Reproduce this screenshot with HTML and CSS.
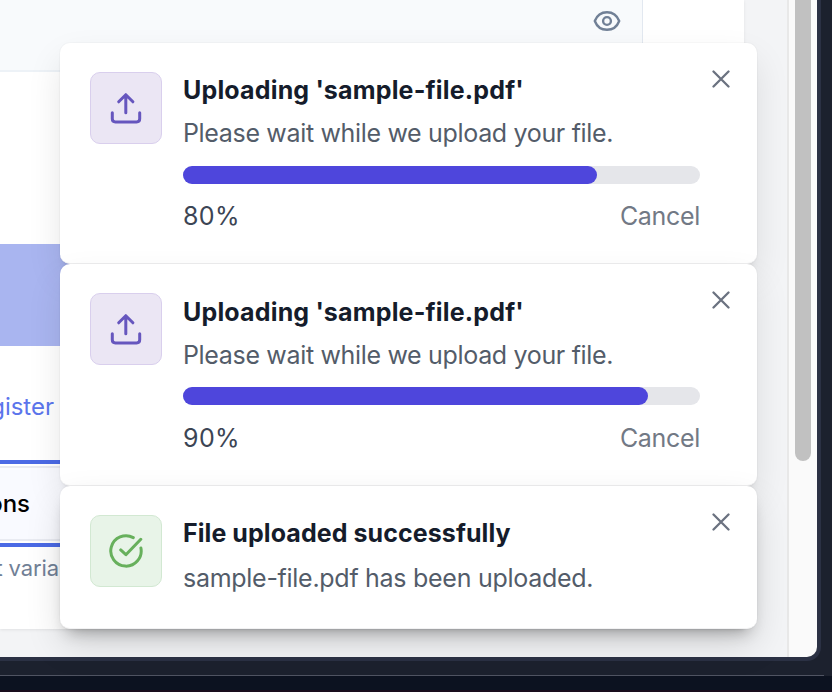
FILE: index.html
```html
<!DOCTYPE html>
<html lang="en">
<head>
<meta charset="utf-8">
<title>Uploads</title>
<link rel="stylesheet" href="styles.css">
</head>
<body>
<div class="desktop">
  <div class="frame">
    <div class="window">
      <main class="page">
        <section class="content">
          <header class="toolbar">
            <svg class="eye" viewBox="0 0 28 22" width="28" height="22"><path d="M1.8 11C4 5.200 8.400 2.200 14 2.200S24 5.200 26.200 11C24 16.800 19.600 19.800 14 19.800S4 16.800 1.800 11Z"/><circle cx="14" cy="11" r="3.900"/></svg>
          </header>
          <div class="banner"></div>
          <div class="link">gister</div>
          <div class="options"><div class="options-label">ons</div></div>
          <div class="hint">t variant</div>
        </section>
      </main>
      <div class="scrollbar"><div class="thumb"></div></div>
    </div>
  </div>
  <div class="rule"></div>
  <div class="dock"></div>
</div>

<div class="toasts">
  <article class="toast">
    <div class="tile upload"><svg viewBox="108 89.500 36 36" width="36" height="36"><path d="M112.300 112.300V118.300Q112.300 121.400 115.400 121.400H136.600Q139.700 121.400 139.700 118.300V112.300M118.700 101.300L125.800 94.200L132.900 101.300M125.800 94.500V112.200"/></svg></div>
    <div class="body">
      <h2 class="title">Uploading 'sample-file.pdf'</h2>
      <p class="text">Please wait while we upload your file.</p>
      <div class="track"><div class="fill" style="width:80%"></div></div>
      <div class="row"><span class="percent">80%</span><span class="cancel">Cancel</span></div>
    </div>
    <svg class="close" viewBox="0 0 18 18" width="18" height="18"><path d="M1.500 1.500L16.500 16.500M16.500 1.500L1.500 16.500"/></svg>
  </article>
  <article class="toast second">
    <div class="tile upload"><svg viewBox="108 89.500 36 36" width="36" height="36"><path d="M112.300 112.300V118.300Q112.300 121.400 115.400 121.400H136.600Q139.700 121.400 139.700 118.300V112.300M118.700 101.300L125.800 94.200L132.900 101.300M125.800 94.500V112.200"/></svg></div>
    <div class="body">
      <h2 class="title">Uploading 'sample-file.pdf'</h2>
      <p class="text">Please wait while we upload your file.</p>
      <div class="track"><div class="fill" style="width:90%"></div></div>
      <div class="row"><span class="percent">90%</span><span class="cancel">Cancel</span></div>
    </div>
    <svg class="close" viewBox="0 0 18 18" width="18" height="18"><path d="M1.500 1.500L16.500 16.500M16.500 1.500L1.500 16.500"/></svg>
  </article>
  <article class="toast done">
    <div class="tile success"><svg viewBox="108 532.500 36 36" width="36" height="36"><path d="M133.300 537.100A15.200 15.200 0 1 0 140.900 547.500M120.700 549.400L125.900 554.200L140.800 538.800"/></svg></div>
    <div class="body">
      <h2 class="title">File uploaded successfully</h2>
      <p class="text">sample-file.pdf has been uploaded.</p>
    </div>
    <svg class="close" viewBox="0 0 18 18" width="18" height="18"><path d="M1.500 1.500L16.500 16.500M16.500 1.500L1.500 16.500"/></svg>
  </article>
</div>
</body>
</html>
```
FILE: styles.css
```css
* { box-sizing: border-box; }
body { margin: 0; width: 832px; height: 692px; overflow: hidden; font-family: Inter, sans-serif; }
svg { display: block; fill: none; stroke-linecap: round; stroke-linejoin: round; }
h2, p { margin: 0; }

.desktop { height: 692px; background: #1c212e; display: flex; flex-direction: column; }
.frame { height: 675px; }
.window {
  width: 821px; height: 661px; display: flex; overflow: hidden;
  border: solid #2b3144; border-width: 0 4px 4px 0; border-radius: 0 0 14px 0;
}
.page { flex: 1; background: #f3f4f6; }
.content { width: 744px; height: 629px; background: #fff; box-shadow: 0 1px 3px rgba(0,0,0,.08); }
.toolbar {
  width: 643px; height: 72px; padding: 10px 21px 0 0; display: flex; justify-content: flex-end;
  background: #f8fafc; border-right: 1px solid #e2e8f0; border-bottom: 2px solid #edf2f7;
}
.eye { stroke: #718096; stroke-width: 2.4; }
.banner { height: 102px; margin-top: 172.400px; background: #a9b5f0; margin-bottom: .6px; }
.link { width: 54px; height: 113px; padding-top: 45px; display: flex; justify-content: flex-end; color: #5b75ec; font-size: 24px; line-height: 30px; }
.options { height: 87px; border: solid #4b6ae5; border-width: 4px 0; padding: 2px 0; }
.options-label {
  height: 75px; padding-right: 714px; display: flex; align-items: center; justify-content: flex-end;
  background: #f9faff; border: solid #e9ebf2; border-width: 2px 0; color: #000; font-size: 24px; font-weight: 500;
}
.hint { width: 79px; padding-top: 6px; display: flex; justify-content: flex-end; white-space: nowrap; color: #718096; font-size: 22px; line-height: 30px; letter-spacing: -.1px; }
.scrollbar { width: 30px; background: #fafafa; border-left: 2px solid #e8e8e8; padding-left: 6px; }
.thumb { width: 16px; height: 461px; background: #c1c1c1; border-radius: 0 0 8px 8px; }
.rule { width: 824px; height: 1px; background: #505462; }
.dock { height: 16px; background: #0c1220; border-bottom: 2px solid #190d1d; }

.toasts { position: absolute; left: 60.400px; top: 42.500px; width: 696.600px; display: flex; flex-direction: column; }
.toast {
  height: 221.500px; padding: 29px 57.100px 0 29.600px; display: flex; gap: 21px; position: relative;
  background: #fff; border-radius: 10px; border-bottom: 1px solid #f2f2f3;
  box-shadow: 0 0 0 1px rgba(0,0,0,.02), 0 16px 36px -2px rgba(0,0,0,.11), 0 8px 10px -6px rgba(0,0,0,.12);
}
.toast.done { height: 143px; box-shadow: 0 0 0 1px rgba(0,0,0,.02), 0 16px 36px -2px rgba(0,0,0,.15), 0 10px 16px -8px rgba(0,0,0,.32); }
.tile { width: 72px; height: 72px; flex: none; border: 1px solid; border-radius: 10px; display: grid; place-items: center; }
.tile svg { stroke-width: 3; }
.upload { background: #ebe6f4; border-color: #d9cfed; }
.upload svg { stroke: #6656be; }
.success { background: #e8f4e8; border-color: #d2e8d2; }
.success svg { stroke: #67b05c; }
.body { flex: 1; min-width: 0; }
.title { color: #151c2b; font-size: 25px; font-weight: 650; letter-spacing: .17px; line-height: 36px; white-space: nowrap; }
.text { margin-top: 7.500px; color: #535c69; font-size: 25px; letter-spacing: -.33px; line-height: 36px; white-space: nowrap; }
.track { height: 18px; margin-top: 14.700px; background: #e5e6ea; border-radius: 9px; }
.fill { height: 18px; background: #4e46dc; border-radius: 9px; }
.row { display: flex; justify-content: space-between; margin-top: 14.400px; font-size: 25px; line-height: 36px; }
.percent { color: #3c4554; letter-spacing: .4px; }
.cancel { color: #727985; letter-spacing: -.33px; }
.close { position: absolute; right: 27px; top: 27px; stroke: #6b7280; stroke-width: 2.3; }

.second .body { padding-top: .6px; }
.second .text { margin-top: 7px; }
.second .track { margin-top: 14px; }
.second .row { margin-top: 15px; }
.done .title { letter-spacing: .07px; }
.done .text { margin-top: 9.200px; letter-spacing: -.28px; }
```
